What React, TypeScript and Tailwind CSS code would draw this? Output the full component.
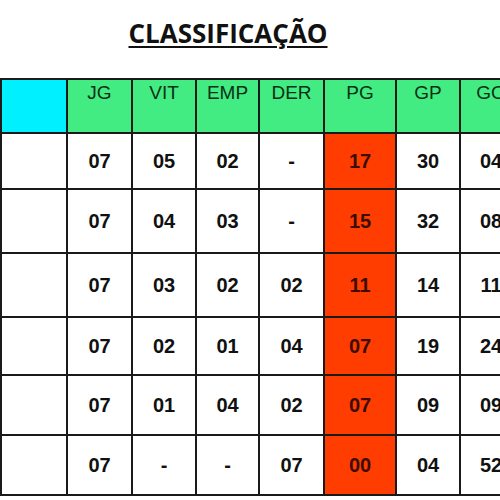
const cols = [
  { key: 'team', label: '', w: 'w-[66px]' },
  { key: 'jg', label: 'JG', w: 'w-[65px]' },
  { key: 'vit', label: 'VIT', w: 'w-[64px]' },
  { key: 'emp', label: 'EMP', w: 'w-[63px]' },
  { key: 'der', label: 'DER', w: 'w-[65px]' },
  { key: 'pg', label: 'PG', w: 'w-[72px]' },
  { key: 'gp', label: 'GP', w: 'w-[64px]' },
  { key: 'go', label: 'GO', w: 'w-[62px]' },
];

const rows = [
  { h: 'h-[56px]', v: ['07', '05', '02', '-', '17', '30', '04'] },
  { h: 'h-[64px]', v: ['07', '04', '03', '-', '15', '32', '08'] },
  { h: 'h-[64px]', v: ['07', '03', '02', '02', '11', '14', '11'] },
  { h: 'h-[58px]', v: ['07', '02', '01', '04', '07', '19', '24'] },
  { h: 'h-[60px]', v: ['07', '01', '04', '02', '07', '09', '09'] },
  { h: 'h-[60px]', v: ['07', '-', '-', '07', '00', '04', '52'] },
];

export default function App() {
  return (
    <div className="w-[500px] h-[500px] overflow-hidden bg-white">
      <h1 className="pt-[16px] h-[78px] text-center pr-[44px] font-['Open_Sans',sans-serif] font-bold text-[26px] leading-[34px] text-[#111] underline decoration-2 underline-offset-[3px] tracking-[0px]">
        CLASSIFICAÇÃO
      </h1>
      <table className="table-fixed border-collapse w-[522px] font-['Liberation_Sans',Arial,sans-serif]">
        <thead>
          <tr className="h-[54px]">
            {cols.map((c, i) => (
              <th
                key={c.key}
                className={`${c.w} border-2 border-[#1a1a1a] align-top pt-0 leading-[26px] text-[19px] font-normal text-[#0b3015] ${
                  i === 0 ? 'bg-[#00f0ff]' : 'bg-[#42ec82]'
                }`}
              >
                {c.label}
              </th>
            ))}
          </tr>
        </thead>
        <tbody>
          {rows.map((r, ri) => (
            <tr key={ri} className={r.h}>
              <td className="border-2 border-[#1a1a1a] bg-white" />
              {r.v.map((val, i) => (
                <td
                  key={i}
                  className={`border-2 border-[#1a1a1a] text-center font-bold text-[20px] ${
                    i === 4 ? 'bg-[#ff3d00] text-[#3d0c00]' : 'bg-white text-[#111]'
                  }`}
                >
                  {val}
                </td>
              ))}
            </tr>
          ))}
        </tbody>
      </table>
    </div>
  );
}
